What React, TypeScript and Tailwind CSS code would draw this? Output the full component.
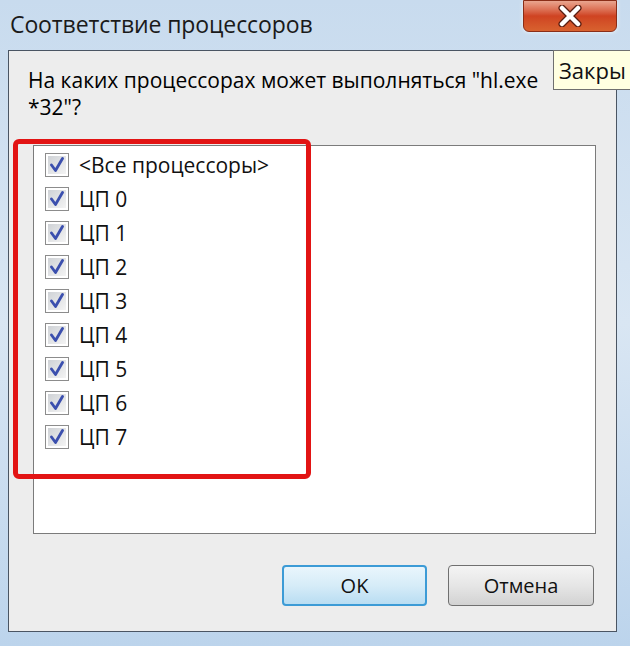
const cpus = ['<Все процессоры>', 'ЦП 0', 'ЦП 1', 'ЦП 2', 'ЦП 3', 'ЦП 4', 'ЦП 5', 'ЦП 6', 'ЦП 7'];

const CheckBox = () => (
  <div className="w-[24px] h-[24px] border border-[#8c8c8c] bg-white p-[2px] shrink-0">
    <div className="w-full h-full bg-gradient-to-br from-[#cfd2d6] to-[#f4f4f4] flex items-center justify-center">
      <svg width="16" height="16" viewBox="0 0 16 16">
        <path d="M2.5 8 L6.5 13.5 L13.5 1.5" fill="none" stroke="#3b4fae" strokeWidth="2.8" strokeLinecap="round" strokeLinejoin="round" />
      </svg>
    </div>
  </div>
);

const CloseButton = () => (
  <div className="absolute top-0 left-[523px] w-[94px] h-[32px] rounded-b-[6px] border border-[#8a2d17] bg-gradient-to-b from-[#e9a58f] via-[#cf4322] to-[#d8622f] flex items-center justify-center shadow-[0_0_4px_rgba(255,255,255,0.8)]">
    <svg width="26" height="22" viewBox="0 0 26 22">
      <path d="M5 3 L21 19 M21 3 L5 19" stroke="#5a1d10" strokeWidth="7" strokeLinecap="round" />
      <path d="M5 3 L21 19 M21 3 L5 19" stroke="#ffffff" strokeWidth="4.5" strokeLinecap="round" />
    </svg>
  </div>
);

const App = () => {
  return (
    <div className="relative w-[630px] h-[646px] overflow-hidden bg-gradient-to-b from-[#c8dbee] via-[#d9e6f3] to-[#bcd4ec] font-['Open_Sans',sans-serif] text-black">
      {/* title bar */}
      <div className="h-[50px] pl-[10px] pt-[9px] text-[23px] leading-[30px] text-[#1a1a1a] tracking-[-0.1px]">
        Соответствие процессоров
      </div>
      <CloseButton />

      {/* client area */}
      <div className="relative ml-[8px] mr-[13px] h-[582px] border border-[#4a5563] bg-[#ededed] flex flex-col">
        <p className="pl-[19px] pt-[16px] text-[21px] leading-[27px]">
          На каких процессорах может выполняться "hl.exe
          <br />
          *32"?
        </p>

        <div className="ml-[24px] mt-[24px] w-[563px] h-[389px] border border-[#7b7b7b] bg-white pt-[7px] pl-[11px] flex flex-col gap-[10px]">
          {cpus.map((name) => (
            <div key={name} className="flex items-center gap-[10px] h-[24px]">
              <CheckBox />
              <span className="text-[21px] leading-[24px] text-[#111]">{name}</span>
            </div>
          ))}
        </div>

        <div className="mt-auto mb-[25px] mr-[22px] flex justify-end gap-[21px]">
          <button className="w-[145px] h-[41px] rounded-[4px] border-2 border-[#3c9bd6] bg-gradient-to-b from-[#e9f5fc] via-[#d6ecf8] to-[#b9ddf2] text-[20px] text-[#111]">
            OK
          </button>
          <button className="w-[146px] h-[41px] rounded-[4px] border border-[#707070] bg-gradient-to-b from-[#f4f4f4] via-[#e6e6e6] to-[#d2d2d2] text-[20px] text-[#111]">
            Отмена
          </button>
        </div>

        {/* red highlight */}
        <div className="absolute left-[4px] top-[88px] w-[298px] h-[340px] rounded-[6px] border-[5px] border-[#e21414]" />
      </div>

      {/* tooltip */}
      <div className="absolute left-[553px] top-[50px] h-[40px] w-[100px] border border-[#6f6f6f] bg-[#ffffe1] pl-[5px] pt-[3px] text-[22px] text-[#111]">
        Закры
      </div>
    </div>
  );
};

export default App;
